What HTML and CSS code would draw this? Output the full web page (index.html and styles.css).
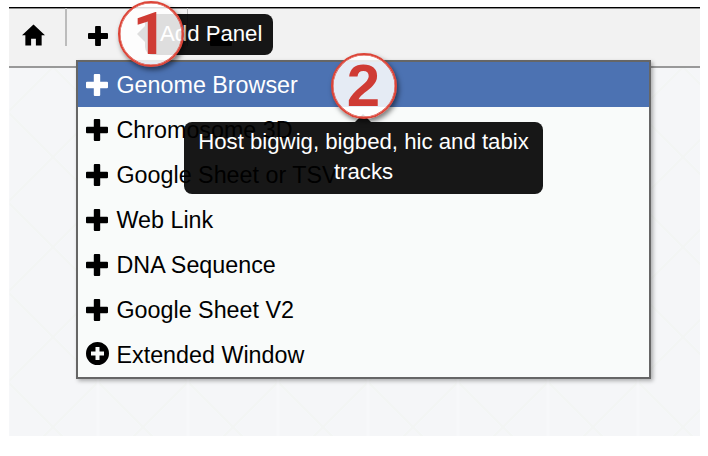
FILE: index.html
```
<!DOCTYPE html>
<html lang="en">
<head>
<meta charset="utf-8">
<title>Add Panel</title>
<link rel="stylesheet" href="styles.css">
</head>
<body>
<svg class="defs" aria-hidden="true">
  <symbol id="plus" viewBox="0 0 22 22"><path d="M8.800 0h4.400a1 1 0 0 1 1 1v6.800h6.800a1 1 0 0 1 1 1v4.400a1 1 0 0 1-1 1h-6.800V21a1 1 0 0 1-1 1H8.800a1 1 0 0 1-1-1v-6.800H1a1 1 0 0 1-1-1V8.800a1 1 0 0 1 1-1h6.800V1a1 1 0 0 1 1-1z"/></symbol>
  <symbol id="plus-circle" viewBox="0 0 23 23"><path fill-rule="evenodd" d="M11.500 0a11.500 11.500 0 1 1 0 23a11.500 11.500 0 1 1 0-23zM9.500 5v4.500H5v4h4.500V18h4v-4.500H18v-4h-4.500V5z"/></symbol>
</svg>
<main class="app">
  <svg class="pattern" aria-hidden="true">
    <defs><pattern id="grid" width="90" height="90" x="44" y="60" patternUnits="userSpaceOnUse">
      <path class="diag" d="M0 0L90 90M90 0L0 90"/><path class="vert" d="M45 0V90"/>
    </pattern></defs>
    <rect width="100%" height="100%" fill="url(#grid)"/>
  </svg>
  <header class="toolbar">
    <svg class="home" viewBox="0 0 24 22"><path d="M12 0L24 11.300H20.500V22H14.500V15H9.500V22H3.500V11.300H0z"/></svg>
    <span class="sep"></span>
    <svg class="add"><use href="#plus"/></svg>
    <span class="sep second"></span>
    <svg class="drive" viewBox="0 0 22 12"><path d="M3 0h16l3 3v8a1 1 0 0 1-1 1H1a1 1 0 0 1-1-1V3z"/></svg>
    <ul class="menu">
      <li class="item active"><svg class="icon"><use href="#plus"/></svg><span>Genome Browser</span></li>
      <li class="item"><svg class="icon"><use href="#plus"/></svg><span>Chromosome 3D</span></li>
      <li class="item"><svg class="icon"><use href="#plus"/></svg><span>Google Sheet or TSV</span></li>
      <li class="item"><svg class="icon"><use href="#plus"/></svg><span>Web Link</span></li>
      <li class="item"><svg class="icon"><use href="#plus"/></svg><span>DNA Sequence</span></li>
      <li class="item"><svg class="icon"><use href="#plus"/></svg><span>Google Sheet V2</span></li>
      <li class="item"><svg class="icon circle"><use href="#plus-circle"/></svg><span>Extended Window</span></li>
    </ul>
    <div class="tooltip tip-add">Add Panel</div>
    <div class="tooltip tip-host">Host bigwig, bigbed, hic and tabix tracks</div>
    <div class="badge one">1</div>
    <div class="badge two">2</div>
  </header>
</main>
</body>
</html>
```
FILE: styles.css
```
* { box-sizing: border-box; }
body {
  margin: 0;
  padding: 7px 8px 0 9px;
  height: 456px;
  overflow: hidden;
  background: #fff;
  font-family: "Liberation Sans", Arial, sans-serif;
}
.defs { position: absolute; width: 0; height: 0; }
.app {
  position: relative;
  height: 429px;
  background: #f5f6f8;
}
.pattern { position: absolute; width: 100%; height: 100%; }
.diag { fill: none; stroke: #f3f5f4; stroke-width: 2; }
.vert { fill: none; stroke: #f7f8fa; stroke-width: 3; }
.toolbar {
  position: relative;
  display: flex;
  align-items: flex-start;
  height: 61px;
  background: #f2f2f2;
  border-top: 1px solid #000;
  border-bottom: 2px solid #999;
  box-shadow: inset 0 1px #8c8c8c;
}
.home { width: 23px; height: 22px; margin: 16px 0 0 12.500px; }
.sep { width: 1.500px; height: 38px; margin-left: 20.500px; background: #bcbcbc; }
.add { width: 20px; height: 20px; margin: 18px 0 0 21px; }
.second { margin-left: 79px; }
.drive { width: 22px; height: 12px; margin: 26px 0 0 22px; }
.menu {
  position: absolute;
  left: 67px;
  top: 52px;
  width: 575px;
  height: 319px;
  margin: 0;
  padding: 0;
  list-style: none;
  background: #f9fbfa;
  border: 2px solid #666;
  box-shadow: 2px 2px 4px rgba(0, 0, 0, .3);
}
.item {
  display: flex;
  align-items: center;
  height: 45px;
  padding-left: 8px;
  gap: 8.500px;
  font-size: 23.300px;
  color: #000;
}
.item span { padding-top: 2px; }
.icon { width: 22px; height: 22px; }
.circle { width: 23px; height: 23px; margin: -2px -1px 0 0; }
.active { background: #4c72b2; color: #fff; }
.active .icon { fill: #fff; }
.tooltip {
  position: absolute;
  padding: 5px 10px;
  border-radius: 8px;
  background: rgba(0, 0, 0, .91);
  color: #fff;
  font-size: 22.200px;
  line-height: 30px;
  text-align: center;
}
.tooltip::before { content: ""; position: absolute; border: 8px solid transparent; }
.tip-add { left: 136px; top: 6px; width: 128px; height: 41px; padding-left: 15px; white-space: nowrap; text-align: left; }
.tip-add::before { left: -16px; top: 12px; border-right-color: rgba(0, 0, 0, .91); }
.tip-host { left: 175px; top: 114px; width: 359px; height: 72px; }
.tip-host::before { left: 171px; top: -16px; border-bottom-color: rgba(0, 0, 0, .91); }
.badge {
  position: absolute;
  width: 66px;
  height: 66px;
  border: 2px solid #dc4437;
  border-radius: 50%;
  background: rgba(255, 255, 255, .86);
  box-shadow: inset 0 0 0 .5px #dc4437, 2px 3px 5px rgba(0, 0, 0, .5);
  color: #cf3b34;
  font-size: 60px;
  font-weight: bold;
  line-height: 61px;
  text-align: center;
}
.one { left: 109px; top: -7px; padding-right: 2px; font-family: Roboto, sans-serif; }
.two { left: 322px; top: 45px; padding-right: 1px; }
```
